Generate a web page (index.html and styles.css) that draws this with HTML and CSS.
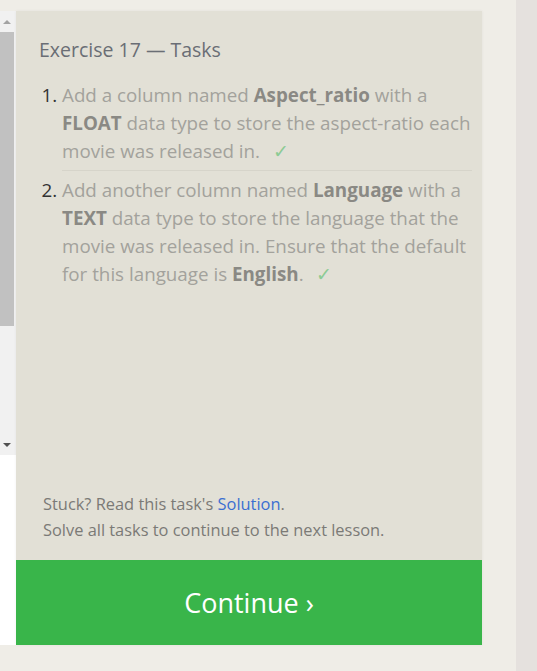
FILE: index.html
```html
<!DOCTYPE html>
<html>
<head>
<meta charset="utf-8">
<link rel="stylesheet" href="styles.css">
</head>
<body>
<div class="page">
  <div class="left">
    <div class="scrollbar">
      <div class="sb-btn"><span class="arrow-up"></span></div>
      <div class="sb-track">
        <div class="sb-thumb"></div>
      </div>
      <div class="sb-btn"><span class="arrow-down"></span></div>
    </div>
    <div class="left-rest"></div>
  </div>
  <div class="panel">
    <div class="panel-body">
      <h2 class="title">Exercise 17 — Tasks</h2>
      <ol class="tasks">
        <li class="task">Add a column named <b>Aspect_ratio</b> with a <b>FLOAT</b> data type to store the aspect-ratio each movie was released in. <span class="check">✓</span></li>
        <li class="task">Add another column named <b>Language</b> with a <b>TEXT</b> data type to store the language that the movie was released in. Ensure that the default for this language is <b>English</b>. <span class="check">✓</span></li>
      </ol>
      <div class="spacer"></div>
      <div class="help">
        <p>Stuck? Read this task's <a class="link" href="#">Solution</a>.</p>
        <p>Solve all tasks to continue to the next lesson.</p>
      </div>
    </div>
    <a class="continue" href="#">Continue ›</a>
  </div>
  <div class="gutter"></div>
  <div class="right-strip"></div>
</div>
</body>
</html>
```

FILE: styles.css
```css
html, body {
  margin: 0;
  padding: 0;
}
body {
  background: #efede7;
  font-family: "Open Sans", "Liberation Sans", sans-serif;
}
.page {
  display: flex;
  height: 671px;
}
.left {
  width: 16px;
  margin-top: 11px;
  height: 634px;
  display: flex;
  flex-direction: column;
  background: #ffffff;
}
.scrollbar {
  width: 16px;
  height: 444px;
  background: #f1f1f1;
  display: flex;
  flex-direction: column;
}
.sb-btn {
  width: 14px;
  height: 21px;
  display: flex;
  align-items: center;
  justify-content: center;
}
.arrow-up {
  width: 0;
  height: 0;
  border-left: 4px solid transparent;
  border-right: 4px solid transparent;
  border-bottom: 4px solid #a3a3a3;
}
.arrow-down {
  width: 0;
  height: 0;
  border-left: 4px solid transparent;
  border-right: 4px solid transparent;
  border-top: 4px solid #505050;
}
.sb-track {
  flex: 1;
  width: 14px;
}
.sb-thumb {
  width: 14px;
  height: 294px;
  background: #c1c1c1;
}
.left-rest {
  flex: 1;
  background: #ffffff;
}
.panel {
  width: 466px;
  margin-top: 11px;
  height: 634px;
  background: #e2e0d6;
  display: flex;
  flex-direction: column;
  box-shadow: 0 0 3px rgba(0, 0, 0, 0.06);
}
.panel-body {
  flex: 1;
  display: flex;
  flex-direction: column;
  padding: 25px 10px 0 23px;
}
.title {
  margin: 0;
  font-size: 19.5px;
  font-weight: normal;
  color: #6a6e75;
  line-height: 28px;
}
.tasks {
  margin: 17px 0 0 0;
  padding: 0 0 0 23px;
}
.task {
  font-size: 18.8px;
  line-height: 28px;
  color: #a3a29c;
  padding-bottom: 5px;
}
.task::marker {
  color: #333333;
}
.task + .task {
  border-top: 1px solid #d6d4ca;
  padding-top: 5px;
}
.task b {
  color: #8a8984;
  font-weight: bold;
}
.check {
  color: #8ccb94;
  margin-left: 8px;
}
.spacer {
  flex: 1;
}
.help {
  padding: 0 0 17px 4px;
  font-size: 16.4px;
  line-height: 26px;
  color: #7b7a76;
}
.help p {
  margin: 0;
}
.link {
  color: #3b6fd1;
  text-decoration: none;
}
.continue {
  height: 85px;
  background: #39b54a;
  color: #ffffff;
  font-size: 27px;
  text-decoration: none;
  display: flex;
  align-items: center;
  justify-content: center;
}
.gutter {
  width: 34px;
}
.right-strip {
  width: 21px;
  background: #e5e1de;
}
```
